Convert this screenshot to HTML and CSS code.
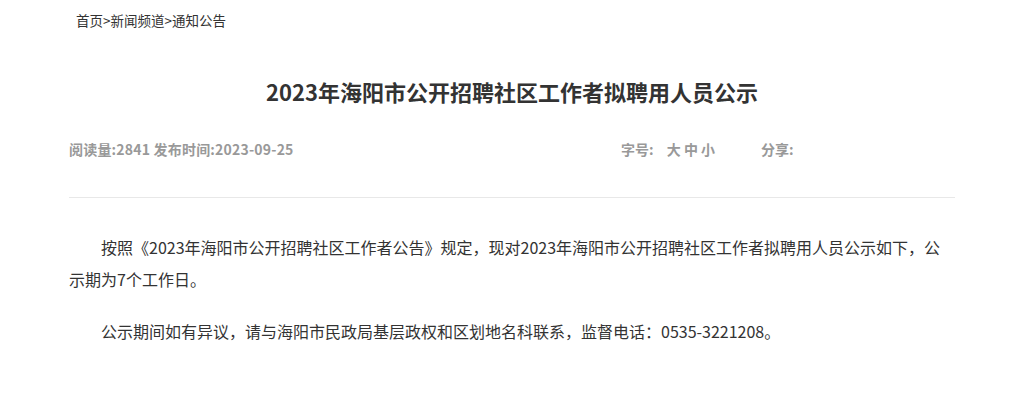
FILE: index.html
```html
<!DOCTYPE html>
<html lang="zh-CN">
<head>
<meta charset="utf-8">
<title>2023年海阳市公开招聘社区工作者拟聘用人员公示</title>
<link rel="stylesheet" href="styles.css">
</head>
<body>
<div class="page">
  <div class="crumbs"><a href="#">首页</a>&gt;<a href="#">新闻频道</a>&gt;<a href="#">通知公告</a></div>
  <h1 class="title">2023年海阳市公开招聘社区工作者拟聘用人员公示</h1>
  <div class="meta">
    <div class="meta-left">阅读量:2841 发布时间:2023-09-25</div>
    <div class="meta-size">字号: <span class="sizes"><a href="#">大</a> <a href="#">中</a> <a href="#">小</a></span></div>
    <div class="meta-share">分享:</div>
  </div>
  <div class="content">
    <p>按照《2023年海阳市公开招聘社区工作者公告》规定，现对2023年海阳市公开招聘社区工作者拟聘用人员公示如下，公示期为7个工作日。</p>
    <p>公示期间如有异议，请与海阳市民政局基层政权和区划地名科联系，监督电话：0535-3221208。</p>
  </div>
</div>
</body>
</html>
```
FILE: styles.css
```css
html, body {
  margin: 0;
  padding: 0;
  background: #fff;
}
body {
  font-family: "Noto Sans CJK SC", "Noto Sans", sans-serif;
  color: #333;
}
a {
  color: inherit;
  text-decoration: none;
}
.page {
  width: 886px;
  margin: 0 0 0 69px;
}
.crumbs {
  font-size: 13.5px;
  line-height: 20px;
  padding: 10px 0 0 7px;
  color: #333;
}
.title {
  margin: 47px 0 0;
  font-size: 22px;
  line-height: 28px;
  font-weight: bold;
  text-align: center;
  color: #333;
}
.meta {
  display: flex;
  align-items: center;
  margin-top: 34px;
  font-size: 14px;
  line-height: 20px;
  font-weight: bold;
  color: #999;
  padding-bottom: 38px;
  border-bottom: 1px solid #e8e8e8;
}
.meta-left {
  width: 552px;
  letter-spacing: 0.2px;
}
.meta-size {
  width: 140px;
}
.sizes {
  margin-left: 10px;
}
.content {
  padding-top: 33px;
  font-size: 16px;
  line-height: 32px;
}
.content p {
  margin: 0 0 20px;
  text-indent: 32px;
}
```
